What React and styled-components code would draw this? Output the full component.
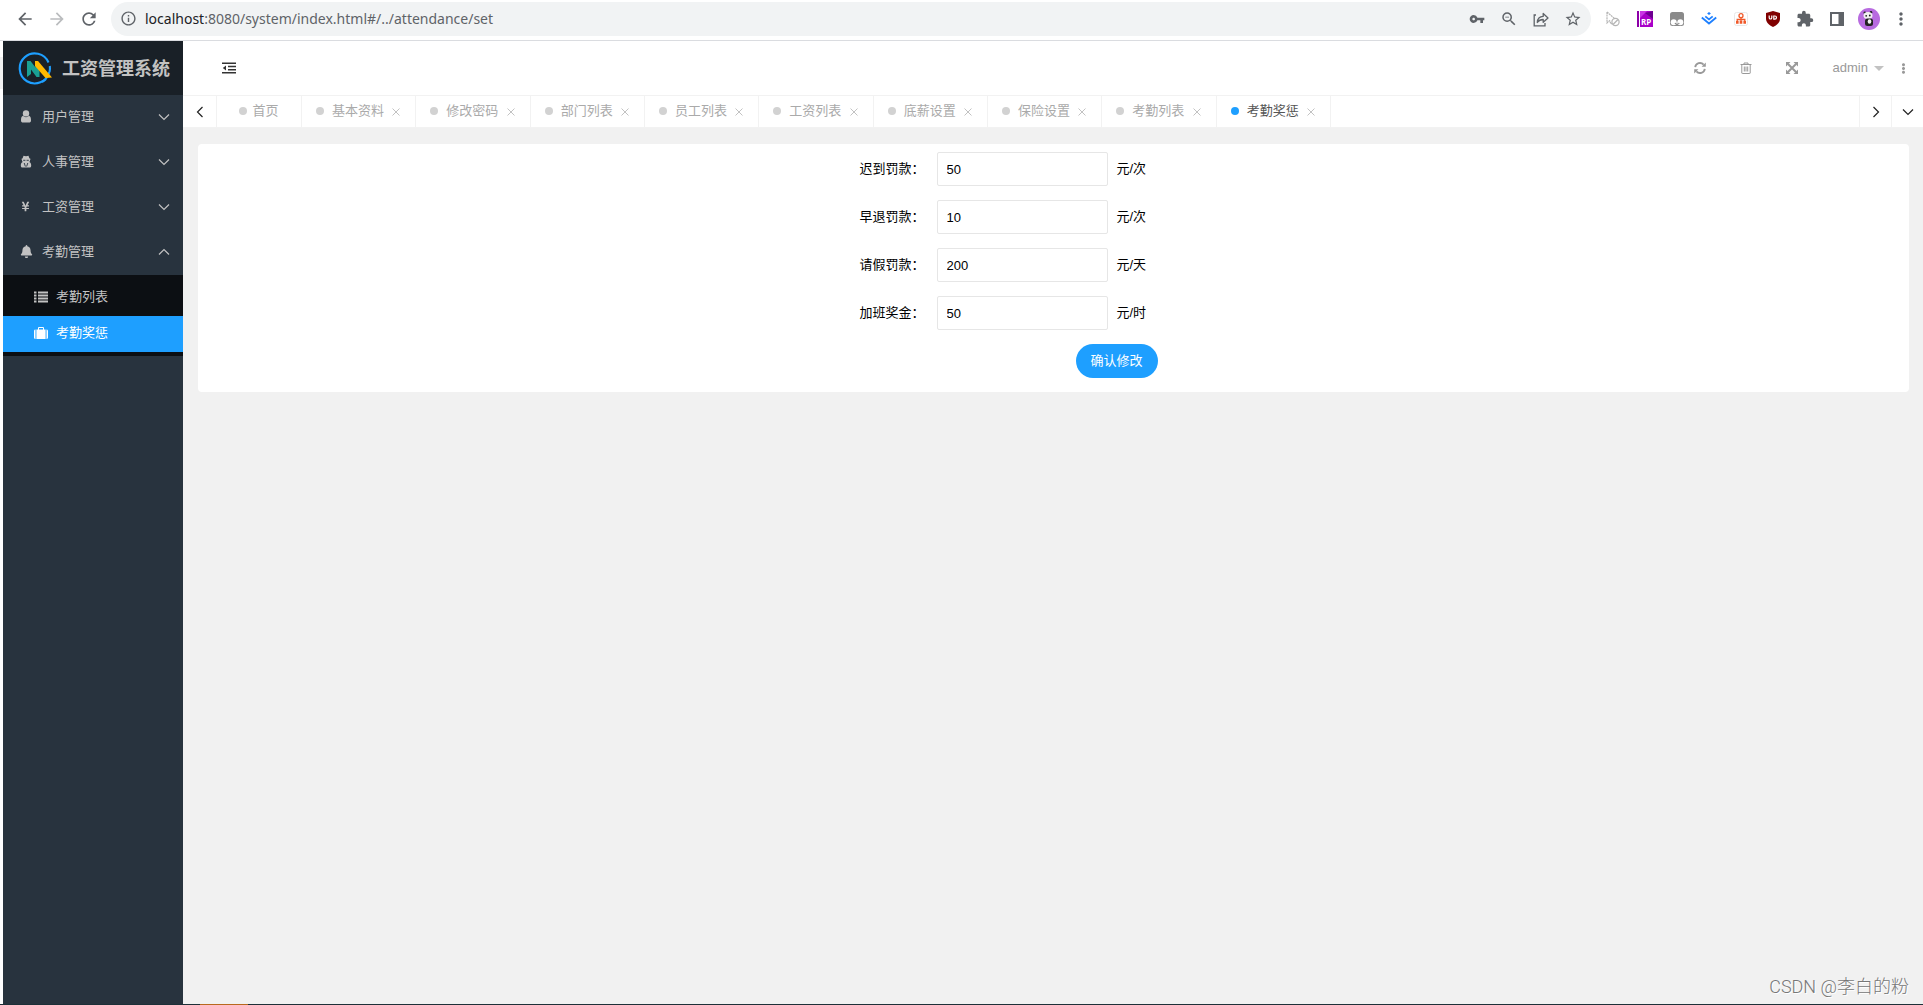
import React, { useState } from 'react';
import styled, { createGlobalStyle } from 'styled-components';
import {
  MdArrowBack,
  MdArrowForward,
  MdRefresh,
  MdInfoOutline,
  MdVpnKey,
  MdZoomOut,
  MdStarBorder,
  MdExtension,
  MdMoreVert
} from 'react-icons/md';
import {
  FaYenSign,
  FaBell,
  FaEllipsisV
} from 'react-icons/fa';

const menuGroups = [
  { label: '用户管理', icon: 'user' },
  { label: '人事管理', icon: 'staff' },
  { label: '工资管理', icon: 'salary' },
  {
    label: '考勤管理',
    icon: 'attendance',
    children: [
      { label: '考勤列表', icon: 'list' },
      { label: '考勤奖惩', icon: 'suitcase' }
    ]
  }
];

const closableTabs = [
  '基本资料',
  '修改密码',
  '部门列表',
  '员工列表',
  '工资列表',
  '底薪设置',
  '保险设置',
  '考勤列表',
  '考勤奖惩'
];

const fields = [
  { name: 'late', label: '迟到罚款', unit: '元/次', value: '50' },
  { name: 'early', label: '早退罚款', unit: '元/次', value: '10' },
  { name: 'leave', label: '请假罚款', unit: '元/天', value: '200' },
  { name: 'overtime', label: '加班奖金', unit: '元/时', value: '50' }
];

/* ---------- icons ---------- */

const UserIcon = () => (
  <svg width="12" height="13" viewBox="0 0 12 13" fill="currentColor">
    <circle cx="6" cy="3.4" r="3.2" />
    <path d="M3 5.8C1.2 6.2 1 8.6 1 10.4 1 11.8 1.8 12.5 3 12.5h6c1.200 0 2-.7 2-2.100C11 8.600 10.800 6.200 9 5.800 8.200 6.700 7.200 7.200 6 7.200S3.800 6.700 3 5.800z" />
  </svg>
);

const StaffIcon = () => (
  <svg width="12" height="13" viewBox="0 0 12 13">
    <path d="M3.500.8L6 1.200 8.500.8l.9 2.400 1.300.7-.6.8c.1 1-.2 1.800-.8 2.400 1.300.5 1.900 1.800 1.900 3.600 0 1.300-.8 1.800-1.900 1.800H2.700C1.600 12.500.8 12 .8 10.700c0-1.800.6-3.100 1.900-3.600-.6-.6-.9-1.400-.8-2.400l-.6-.8 1.300-.7z" fill="currentColor" />
    <path d="M3.200 5.300h2.200M6.600 5.300h2.200M4.200 8l1.200 3.500M7.800 8l-1.200 3.500" stroke="#28333e" strokeWidth=".9" />
  </svg>
);

const ListIcon = () => (
  <svg width="14" height="12" viewBox="0 0 14 12" fill="currentColor">
    <path d="M0 .5h2.500v2H0zM4 .5h10v2H4zM0 3.500h2.500v2H0zM4 3.500h10v2H4zM0 6.500h2.500v2H0zM4 6.500h10v2H4zM0 9.500h2.500v2H0zM4 9.500h10v2H4z" />
  </svg>
);

const SuitcaseIcon = () => (
  <svg width="14" height="12" viewBox="0 0 14 12" fill="currentColor">
    <path d="M0 4c0-1 .6-1.600 1.500-1.600V12C.6 12 0 11.300 0 10.500zM2.400 2.400H4V1.200C4 .5 4.500 0 5.200 0h3.600C9.500 0 10 .5 10 1.200v1.200h1.600V12H2.400zM5 2.400h4V1H5zM12.500 2.400c.9 0 1.500.6 1.500 1.600v6.500c0 .8-.6 1.500-1.500 1.500z" />
  </svg>
);

const Chevron = ({ direction }) => {
  const paths = {
    down: 'M1 3.500L6 8.500L11 3.500',
    up: 'M1 8.500L6 3.500L11 8.500',
    left: 'M8.500 1L3.500 6L8.500 11',
    right: 'M3.500 1L8.500 6L3.500 11'
  };
  return (
    <svg width="12" height="12" viewBox="0 0 12 12" fill="none" stroke="currentColor" strokeWidth="1.2">
      <path d={paths[direction]} />
    </svg>
  );
};

const LogoMark = () => (
  <svg width="34" height="34" viewBox="0 0 34 34" fill="none">
    <path d="M31.300 20A15 15 0 1 1 30.500 10.500" stroke="#1e9fff" strokeWidth="2.100" />
    <path d="M31.800 14A15 15 0 0 1 31.500 20M28 27a15 15 0 0 1-4 3" stroke="#1e9fff" strokeWidth="2.100" />
    <path d="M9 25V9h3.500l5 6.500V12l4 6v7h-3L13 17.500V22z" fill="#1aa094" />
    <path d="M17 9h3l14 16.500-6.500.5L17 14z" fill="#ffb800" />
  </svg>
);

const FoldIcon = () => (
  <svg width="14" height="12" viewBox="0 0 14 12" fill="currentColor">
    <path d="M0 .5h14V2H0zM6 3.700h8v1.500H6zM6 6.900h8v1.500H6zM0 10h14v1.500H0zM4 3.500v5L.8 6z" />
  </svg>
);

const SyncIcon = () => (
  <svg width="12" height="12" viewBox="0 0 12 12">
    <path d="M1.200 5.200A4.800 4.800 0 0 1 9.600 2.700M10.800 6.800A4.800 4.800 0 0 1 2.400 9.300" fill="none" stroke="currentColor" strokeWidth="1.800" />
    <path d="M11.800.6v4.200H7.600zM.2 11.400V7.200h4.200z" fill="currentColor" />
  </svg>
);

const TrashIcon = () => (
  <svg width="12" height="12" viewBox="0 0 12 12" fill="none" stroke="currentColor">
    <path d="M.5 2.500h11M4 2.500V1h4v1.500M1.800 2.500V11q0 .5.500.5h7.400q.5 0 .5-.5V2.500M4.300 4.500v5M6 4.500v5M7.700 4.500v5" />
  </svg>
);

const ExpandIcon = () => (
  <svg width="12" height="12" viewBox="0 0 12 12">
    <path d="M2 2l8 8M10 2l-8 8" stroke="currentColor" strokeWidth="2" />
    <path d="M0 0h4.500L0 4.500zM12 0v4.500L7.500 0zM0 12V7.500L4.500 12zM12 12H7.500L12 7.500z" fill="currentColor" />
  </svg>
);

const ShareIcon = () => (
  <svg width="16" height="16" viewBox="0 0 16 16" fill="none" stroke="currentColor" strokeWidth="1.300">
    <path d="M3 4H1.200v10.800H12V12" />
    <path d="M4.300 11.500C4.500 7.500 6.500 5.500 10.200 5.400V2.500L15 7l-4.800 4.200V8.500C7.500 8.500 5.700 9.400 4.300 11.500z" strokeLinejoin="round" />
  </svg>
);

const CursorIcon = () => (
  <svg width="16" height="16" viewBox="0 0 16 16" fill="none" stroke="#b5b5b5" strokeWidth="1.200">
    <path d="M2 1v11l2.600-2.300L6 13l1.500-.6M2 1l7.500 6.500" strokeDasharray="2 .6" />
    <circle cx="10.500" cy="11" r="3.600" />
    <path d="M8 13.500l5-5" />
  </svg>
);

const AxureIcon = () => (
  <svg width="16" height="16" viewBox="0 0 16 16">
    <path d="M0 0h2v16H0z" fill="#8c00a8" />
    <path d="M3 0h13v16H3z" fill="#a800c8" />
    <path d="M3 0h7L3 7z" fill="#c934e4" />
    <path d="M16 0v8L8 2z" fill="#6d0090" />
    <text x="4" y="14" fontFamily="Open Sans, sans-serif" fontWeight="700" fontSize="8" fill="#fff">RP</text>
  </svg>
);

const MonkeyIcon = () => (
  <svg width="14" height="14" viewBox="0 0 14 14">
    <rect width="14" height="14" rx="2.500" fill="#8a8a8a" />
    <circle cx="3.700" cy="10.300" r="3" fill="#fff" />
    <circle cx="10.300" cy="10.300" r="3" fill="#fff" />
    <circle cx="5.400" cy="11.500" r=".7" fill="#8a8a8a" />
    <circle cx="8.800" cy="11.500" r=".7" fill="#8a8a8a" />
  </svg>
);

const JuejinIcon = () => (
  <svg width="16" height="13" viewBox="0 0 16 13" fill="none" stroke="#1e80ff" strokeWidth="1.800">
    <path d="M.8 5.500L8 11.500l7.200-6M4.300 4.400L8 7.400l3.700-3" />
    <path d="M8 0l1.900 1.500L8 3 6.100 1.500z" fill="#1e80ff" stroke="none" />
  </svg>
);

const TreeIcon = () => (
  <svg width="14" height="14" viewBox="0 0 14 14">
    <rect x=".5" y=".5" width="13" height="13" rx="2" fill="#fff" stroke="#e8e8e8" />
    <circle cx="7" cy="3.700" r="2" fill="none" stroke="#f0592a" strokeWidth="1.300" />
    <path d="M7 5.500v5M3.200 9V7.500h7.600V9" fill="none" stroke="#f0592a" strokeWidth="1.300" />
    <path d="M2 9h2.600v2.800H2zM5.700 9h2.600v2.800H5.700zM9.400 9H12v2.800H9.400z" fill="#f0592a" />
  </svg>
);

const ShieldIcon = () => (
  <svg width="14" height="16" viewBox="0 0 14 16">
    <path d="M7 0l7 2v5.500c0 4-3 6.500-7 8.500-4-2-7-4.500-7-8.500V2z" fill="#800000" />
    <path d="M3.200 4.500v2.200c0 1.700 2.600 1.700 2.600 0V4.500" fill="none" stroke="#fff" strokeWidth="1.200" />
    <path d="M7.800 5h1.100a1.600 1.600 0 0 1 0 3.200H7.800z" fill="none" stroke="#fff" strokeWidth="1.200" />
  </svg>
);

const PanelIcon = () => (
  <svg width="14" height="14" viewBox="0 0 14 14">
    <path d="M0 0h14v14H0zM2 2v10h6.500V2z" fill="#5f6368" fillRule="evenodd" />
  </svg>
);

const PandaAvatar = () => (
  <svg width="22" height="22" viewBox="0 0 22 22">
    <circle cx="11" cy="11" r="11" fill="#b86be0" />
    <circle cx="6.800" cy="4.800" r="1.300" fill="#222" />
    <circle cx="13" cy="4.300" r="1.300" fill="#222" />
    <ellipse cx="10" cy="7.500" rx="4.500" ry="3.500" fill="#f2f2f2" />
    <circle cx="8.200" cy="7.800" r=".9" fill="#222" />
    <circle cx="11.800" cy="7.500" r=".9" fill="#222" />
    <rect x="7" y="10.500" width="8" height="7.500" rx="2.500" fill="#222" />
    <ellipse cx="11.500" cy="13.500" rx="1.800" ry="2.300" fill="#f2f2f2" />
  </svg>
);

const menuIcons = {
  user: <UserIcon />,
  staff: <StaffIcon />,
  salary: <FaYenSign size={11} />,
  attendance: <FaBell size={13} />,
  list: <ListIcon />,
  suitcase: <SuitcaseIcon />
};

const pageActions = [
  { label: 'passwords', icon: <MdVpnKey size={16} /> },
  { label: 'zoom', icon: <MdZoomOut size={18} /> },
  { label: 'share', icon: <ShareIcon /> },
  { label: 'bookmark', icon: <MdStarBorder size={18} /> }
];

const extensions = [
  { label: 'cursor', icon: <CursorIcon /> },
  { label: 'axure', icon: <AxureIcon /> },
  { label: 'scripts', icon: <MonkeyIcon /> },
  { label: 'juejin', icon: <JuejinIcon /> },
  { label: 'tree', icon: <TreeIcon /> },
  { label: 'blocker', icon: <ShieldIcon /> },
  { label: 'extensions', icon: <MdExtension size={18} /> },
  { label: 'side panel', icon: <PanelIcon /> },
  { label: 'profile', icon: <PandaAvatar /> },
  { label: 'menu', icon: <MdMoreVert size={20} /> }
];

/* ---------- page ---------- */

const App = () => {
  const [activeTab, setActiveTab] = useState('考勤奖惩');
  const [values, setValues] = useState(
    Object.fromEntries(fields.map((field) => [field.name, field.value]))
  );

  const handleChange = (e) => {
    setValues({ ...values, [e.target.name]: e.target.value });
  };

  return (
    <Page>
      <GlobalStyle />

      <BrowserBar>
        <BrowserButton aria-label="back"><MdArrowBack size={20} /></BrowserButton>
        <BrowserButton aria-label="forward" $muted><MdArrowForward size={20} /></BrowserButton>
        <BrowserButton aria-label="reload"><MdRefresh size={20} /></BrowserButton>
        <AddressBar>
          <MdInfoOutline size={17} />
          <Address><b>localhost</b>:8080/system/index.html#/../attendance/set</Address>
          {pageActions.map((action) => (
            <BrowserButton key={action.label} aria-label={action.label}>{action.icon}</BrowserButton>
          ))}
        </AddressBar>
        {extensions.map((ext) => (
          <BrowserButton key={ext.label} aria-label={ext.label}>{ext.icon}</BrowserButton>
        ))}
      </BrowserBar>

      <Workspace>
        <Sidebar>
          <Brand><LogoMark /><h1>工资管理系统</h1></Brand>
          {menuGroups.map((group) => (
            <div key={group.label}>
              <MenuButton aria-expanded={Boolean(group.children)}>
                <MenuIcon>{menuIcons[group.icon]}</MenuIcon>
                <span>{group.label}</span>
                <Chevron direction={group.children ? 'up' : 'down'} />
              </MenuButton>
              {group.children && (
                <SubMenu>
                  {group.children.map((child) => (
                    <SubLink
                      key={child.label}
                      href="#"
                      $active={child.label === activeTab}
                      onClick={() => setActiveTab(child.label)}
                    >
                      {menuIcons[child.icon]}
                      {child.label}
                    </SubLink>
                  ))}
                </SubMenu>
              )}
            </div>
          ))}
        </Sidebar>

        <Main>
          <Header>
            <IconButton aria-label="fold" $dark><FoldIcon /></IconButton>
            <HeaderTools>
              <IconButton aria-label="refresh"><SyncIcon /></IconButton>
              <IconButton aria-label="clear"><TrashIcon /></IconButton>
              <IconButton aria-label="fullscreen"><ExpandIcon /></IconButton>
              <AdminButton>admin<Caret /></AdminButton>
              <MoreButton aria-label="more"><FaEllipsisV size={11} /></MoreButton>
            </HeaderTools>
          </Header>

          <TabBar>
            <TabArrow aria-label="previous"><Chevron direction="left" /></TabArrow>
            <HomeTab onClick={() => setActiveTab('首页')} $active={activeTab === '首页'}>
              <Dot $active={activeTab === '首页'} />
              首页
            </HomeTab>
            <TabList>
              {closableTabs.map((tab) => (
                <Tab key={tab} $active={tab === activeTab}>
                  <TabName onClick={() => setActiveTab(tab)}>
                    <Dot $active={tab === activeTab} />
                    {tab}
                  </TabName>
                  <CloseButton aria-label={`关闭${tab}`}>
                    <svg width="8" height="8" viewBox="0 0 8 8" stroke="currentColor">
                      <path d="M.5.5l7 7M7.500.5l-7 7" />
                    </svg>
                  </CloseButton>
                </Tab>
              ))}
            </TabList>
            <TabArrow aria-label="next" $end><Chevron direction="right" /></TabArrow>
            <TabArrow aria-label="all tabs" $end><Chevron direction="down" /></TabArrow>
          </TabBar>

          <Content>
            <Card onSubmit={(e) => e.preventDefault()}>
              {fields.map((field) => (
                <FormRow key={field.name}>
                  <label htmlFor={field.name}>{field.label}：</label>
                  <TextInput
                    id={field.name}
                    name={field.name}
                    value={values[field.name]}
                    onChange={handleChange}
                  />
                  <span>{field.unit}</span>
                </FormRow>
              ))}
              <FormRow>
                <SubmitButton type="submit">确认修改</SubmitButton>
              </FormRow>
            </Card>
            <Watermark>CSDN @李白的粉</Watermark>
          </Content>
        </Main>
      </Workspace>

      <Taskbar><TaskMarker /></Taskbar>
    </Page>
  );
};

const GlobalStyle = createGlobalStyle`
  * {
    box-sizing: border-box;
  }

  body {
    margin: 0;
    color: #000;
    font: 13px/20px "Liberation Sans", "Noto Sans CJK SC", sans-serif;
  }

  button {
    padding: 0;
    border: 0;
    background: none;
    color: inherit;
    font: inherit;
    cursor: pointer;
  }
`;

const Page = styled.div`
  display: flex;
  flex-direction: column;
  min-height: 100vh;
  background: #fff;
`;

const BrowserBar = styled.div`
  display: flex;
  align-items: center;
  height: 41px;
  padding: 0 6px 3px 9px;
  border-bottom: 1px solid #dadce0;
  color: #5f6368;
`;

const BrowserButton = styled.button`
  display: flex;
  flex: none;
  align-items: center;
  justify-content: center;
  width: 32px;
  height: 32px;
  color: ${({ $muted }) => ($muted ? '#babcbe' : '#5f6368')};
`;

const AddressBar = styled.div`
  display: flex;
  flex: 1;
  align-items: center;
  height: 34px;
  margin: 0 6px;
  padding: 0 2px 0 9px;
  border-radius: 17px;
  background: #f1f3f4;
`;

const Address = styled.span`
  flex: 1;
  margin-left: 8px;
  font: 14px/20px "Noto Sans", sans-serif;

  b {
    color: #202124;
    font-weight: 400;
  }
`;

const Workspace = styled.div`
  display: flex;
  flex: 1;
  padding-left: 3px;
  background: linear-gradient(#f1f1f1, #f1f1f1) 0 16px / 3px 32px no-repeat;
`;

const Sidebar = styled.nav`
  flex: none;
  width: 180px;
  background: #28333e;
  color: #c2c2c2;
`;

const Brand = styled.div`
  display: flex;
  align-items: center;
  gap: 10px;
  height: 54px;
  padding: 2px 0 0 15px;
  background: #192027;

  h1 {
    margin: 0;
    font-size: 18px;
    line-height: 24px;
    white-space: nowrap;
  }
`;

const MenuButton = styled.button`
  display: flex;
  align-items: center;
  width: 100%;
  height: 45px;
  padding: 0 13px 2px 17px;
  text-align: left;

  span {
    flex: 1;
  }
`;

const MenuIcon = styled.i`
  display: flex;
  width: 22px;
`;

const SubMenu = styled.div`
  padding: 5px 0 4px;
  background: #0c0f13;
`;

const SubLink = styled.a`
  display: flex;
  align-items: center;
  gap: 8px;
  height: 36px;
  padding: 0 0 2px 31px;
  background: ${({ $active }) => ($active ? '#1e9fff' : 'transparent')};
  color: ${({ $active }) => ($active ? '#fff' : '#c2c2c2')};
  text-decoration: none;
`;

const Main = styled.main`
  display: flex;
  flex: 1;
  flex-direction: column;
  min-width: 0;
`;

const Header = styled.header`
  display: flex;
  align-items: center;
  justify-content: space-between;
  height: 55px;
  padding: 0 9px 0 23px;
  border-bottom: 1px solid #f2f2f2;
`;

const IconButton = styled.button`
  display: flex;
  align-items: center;
  justify-content: center;
  width: 46px;
  height: 54px;
  color: ${({ $dark }) => ($dark ? '#333' : '#999')};
`;

const HeaderTools = styled.div`
  display: flex;
  align-items: center;
  color: #999;
`;

const AdminButton = styled.button`
  display: flex;
  align-items: center;
  gap: 6px;
  margin-left: 18px;
`;

const Caret = styled.i`
  border: 5px solid transparent;
  border-top-color: #c2c2c2;
  border-bottom: 0;
`;

const MoreButton = styled.button`
  display: flex;
  justify-content: center;
  width: 22px;
  margin-left: 8px;
`;

const TabBar = styled.div`
  display: flex;
  height: 32px;
  border-bottom: 1px solid #f2f2f2;
`;

const TabArrow = styled.button`
  display: flex;
  flex: none;
  align-items: center;
  justify-content: center;
  width: ${({ $end }) => ($end ? '32px' : '34px')};
  border: 0 solid #f2f2f2;
  border-width: ${({ $end }) => ($end ? '0 0 0 1px' : '0 1px 0 0')};
  color: #222;
`;

const HomeTab = styled.button`
  display: flex;
  flex: none;
  align-items: center;
  justify-content: center;
  gap: 5px;
  width: 85px;
  padding-bottom: 2px;
  border-right: 1px solid #f2f2f2;
  color: ${({ $active }) => ($active ? '#555' : '#aaa')};
`;

const TabList = styled.div`
  display: grid;
  flex: 0 1 1029px;
  grid-template-columns: repeat(9, 1fr);
  margin-right: auto;
`;

const Tab = styled.div`
  display: flex;
  align-items: center;
  justify-content: space-between;
  padding: 0 15px 2px 14px;
  border-right: 1px solid #f2f2f2;
  color: ${({ $active }) => ($active ? '#555' : '#aaa')};
`;

const TabName = styled.button`
  display: flex;
  align-items: center;
  gap: 8px;
  white-space: nowrap;
`;

const Dot = styled.i`
  width: 8px;
  height: 8px;
  border-radius: 50%;
  background: ${({ $active }) => ($active ? '#1e9fff' : '#d2d2d2')};
`;

const CloseButton = styled.button`
  display: flex;
  padding-top: 2px;
  color: #c2c2c2;
`;

const Content = styled.div`
  display: flex;
  flex: 1;
  flex-direction: column;
  justify-content: space-between;
  padding: 16px 14px 5px 15px;
  background: #f1f1f1;
`;

const Card = styled.form`
  display: grid;
  gap: 14px;
  justify-content: center;
  padding: 8px 0 14px;
  border-radius: 4px;
  background: #fff;
`;

const FormRow = styled.div`
  display: grid;
  grid-template-columns: 68px 171px 131px;
  gap: 9px;
  align-items: center;
  height: 34px;
`;

const TextInput = styled.input`
  width: 100%;
  height: 34px;
  padding: 0 9px;
  border: 1px solid #e6e6e6;
  border-radius: 2px;
  color: #000;
  font: inherit;
`;

const SubmitButton = styled.button`
  grid-column: 2 / 4;
  width: 82px;
  height: 34px;
  margin-left: 139px;
  border-radius: 17px;
  background: #1e9fff;
  color: #fff;
`;

const Watermark = styled.div`
  align-self: flex-end;
  color: #777;
  font: 300 18px/24px Roboto, "Noto Sans CJK SC", sans-serif;
  text-shadow: 1px 1px 0 #fff;
`;

const Taskbar = styled.div`
  height: 1px;
  padding-left: 200px;
  background: #1d3038;
`;

const TaskMarker = styled.div`
  width: 48px;
  height: 1px;
  background: #b8691d;
`;

export default App;
